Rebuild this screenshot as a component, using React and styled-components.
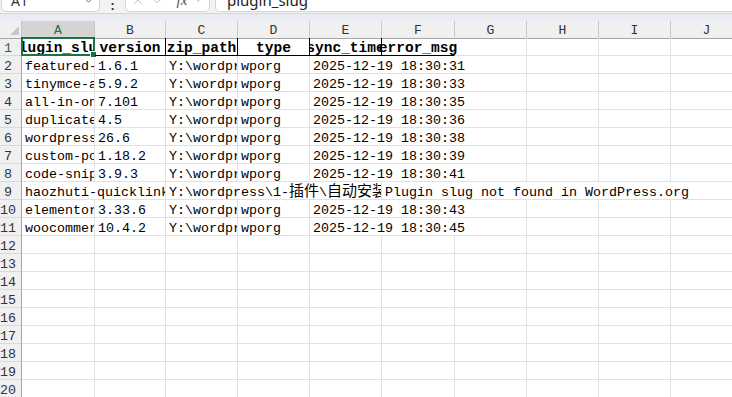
import React from "react";
import styled, { createGlobalStyle } from "styled-components";
import { X, Check, ChevronDown } from "lucide-react";

const green = "#1e7145";
const gridLine = "#e1e1e1";
const headBg = "#f0f0f0";
const mono = `"Liberation Mono", "Noto Sans CJK SC", monospace`;

const colWidths = [73, 71, 72, 72, 72, 73, 72, 72, 72, 72];
const letters = ["A", "B", "C", "D", "E", "F", "G", "H", "I", "J"];
const template = `22px ${colWidths.map((w) => w + "px").join(" ")}`;

const GlobalStyle = createGlobalStyle`
  html, body {
    margin: 0;
    padding: 0;
    background: #fff;
    overflow: hidden;
  }
  body {
    font-family: ${mono};
  }
`;

const Page = styled.div`
  width: 732px;
  height: 397px;
  overflow: hidden;
  display: flex;
  flex-direction: column;
  background: #fff;
`;

const FormulaBar = styled.div`
  height: 12px;
  flex: none;
  display: flex;
  align-items: flex-end;
  overflow: hidden;
  background: #f3f3f3;
  padding: 0 0 1px 1px;
`;

const Box = styled.div`
  height: 24px;
  box-sizing: border-box;
  background: #fff;
  border: 1px solid #d4d4d4;
  border-radius: 5px;
  display: flex;
  align-items: center;
  flex: none;
  color: #333;
  font-family: "Noto Sans", sans-serif;
`;

const NameBox = styled(Box)`
  width: 99px;
  justify-content: space-between;
  padding: 0 4px 0 9px;
  font-size: 14px;
`;

const Colon = styled.div`
  width: 25px;
  height: 12px;
  align-self: flex-start;
  line-height: 11px;
  text-align: center;
  font-family: "Noto Sans", sans-serif;
  font-weight: bold;
  font-size: 13px;
  color: #333;
`;

const ToolBox = styled(Box)`
  width: 85px;
  padding: 0 6px 0 5px;
  gap: 7px;
  color: #a8a8a8;
`;

const Fx = styled.span`
  font-family: "Liberation Serif", serif;
  font-style: italic;
  font-size: 15px;
  color: #555;
  margin-left: 4px;
`;

const FormulaInput = styled(Box)`
  flex: 1;
  margin-left: 5px;
  padding-left: 11px;
  font-size: 15px;
  color: #222;
  border-right: none;
  border-top-right-radius: 0;
  border-bottom-right-radius: 0;
`;

const Band = styled.div`
  height: 8px;
  flex: none;
  box-sizing: border-box;
  background: #e9edf1;
  border-top: 1px solid #d6d6d6;
`;

const Grid = styled.div`
  display: grid;
  grid-template-columns: ${template};
  grid-auto-rows: 18px;
`;

const HeaderRow = styled.div`
  display: grid;
  grid-template-columns: ${template};
  height: 17px;
  flex: none;
`;

const Corner = styled.div`
  position: relative;
  background: ${headBg};
  box-sizing: border-box;
  border-right: 1px solid #c4c4c4;
  border-bottom: 1px solid #a6a6a6;
  &::after {
    content: "";
    position: absolute;
    left: 10px;
    top: 5px;
    width: 9px;
    height: 9px;
    background: #c8c8c8;
    clip-path: polygon(100% 0, 100% 100%, 0 100%);
  }
`;

const ColHead = styled.div`
  box-sizing: border-box;
  background: ${(p) => (p.$active ? "#d4d4d4" : headBg)};
  color: ${(p) => (p.$active ? green : "#333")};
  border-right: 1px solid #c8c8c8;
  border-bottom: 1px solid #a6a6a6;
  text-align: center;
  font-size: 13px;
  line-height: 14px;
  padding-top: 3px;
`;

const RowHead = styled.div`
  box-sizing: border-box;
  background: ${headBg};
  color: ${(p) => (p.$active ? green : "#333")};
  border-right: 1px solid #a6a6a6;
  border-bottom: 1px solid #d9d9d9;
  text-align: center;
  padding: 4px 5px 0 0;
  font-size: 13.33px;
  line-height: 14px;
`;

const Cell = styled.div`
  grid-column: span ${(p) => p.$span};
  box-sizing: border-box;
  border-right: 1px solid ${gridLine};
  border-bottom: 1px solid ${gridLine};
  padding: 4px 0 0 3px;
  font-size: 13.33px;
  line-height: 14px;
  color: #000;
  white-space: nowrap;
  overflow: hidden;
`;

const Wide = styled.span`
  font-family: "Noto Sans CJK SC", sans-serif;
  font-size: 15px;
  line-height: 0;
`;

const TitleCell = styled.div`
  position: relative;
  box-sizing: border-box;
  border-right: 1px solid ${(p) => (p.$edge ? gridLine : "#000")};
  border-bottom: 1px solid ${(p) => (p.$blank ? gridLine : "#000")};
  ${(p) => p.$open && "border-right-color: transparent;"}
  padding-top: 3px;
  font-weight: bold;
  font-size: 14.5px;
  line-height: 15px;
  text-align: center;
  white-space: nowrap;
  overflow: ${(p) => (p.$open ? "visible" : "hidden")};
  display: flex;
  justify-content: center;
`;

const Selection = styled.div`
  position: absolute;
  left: -1px;
  top: -1px;
  right: -1px;
  bottom: -1px;
  border: 2px solid ${green};
  pointer-events: none;
  &::after {
    content: "";
    position: absolute;
    right: -4px;
    bottom: -4px;
    width: 5px;
    height: 5px;
    background: ${green};
    border: 1px solid #fff;
  }
`;

const ClipText = styled.span`
  overflow: hidden;
  white-space: nowrap;
  display: flex;
  justify-content: center;
  width: 100%;
`;

const titles = ["plugin_slug", "version", "zip_path", "type", "sync_time", "error_msg"];

const base = "Y:\\wordpress\\1-插件\\自动安装\\";
const records = [
  ["featured-image-from-url", "1.6.1", "wporg", "2025-12-19 18:30:31"],
  ["tinymce-advanced", "5.9.2", "wporg", "2025-12-19 18:30:33"],
  ["all-in-one-wp-migration", "7.101", "wporg", "2025-12-19 18:30:35"],
  ["duplicate-post", "4.5", "wporg", "2025-12-19 18:30:36"],
  ["wordpress-seo", "26.6", "wporg", "2025-12-19 18:30:38"],
  ["custom-post-type-ui", "1.18.2", "wporg", "2025-12-19 18:30:39"],
  ["code-snippets", "3.9.3", "wporg", "2025-12-19 18:30:41"],
  ["haozhuti-quicklinks", "", "", "", "Plugin slug not found in WordPress.org"],
  ["elementor", "3.33.6", "wporg", "2025-12-19 18:30:43"],
  ["woocommerce", "10.4.2", "wporg", "2025-12-19 18:30:45"],
].map(([slug, ver, type, time, err = ""]) => [
  slug,
  ver,
  base + slug + ".zip",
  type,
  time,
  err,
]);

const cjk = /[\u3000-\u9fff]/;
const textWidth = (t) => [...t].reduce((w, ch) => w + (cjk.test(ch) ? 15 : 8), 0) + 3;

// CJK runs get a wider face, like the sheet's SimSun
const renderText = (t) =>
  t.split(/([\u3000-\u9fff]+)/).map((part, i) =>
    cjk.test(part) ? <Wide key={i}>{part}</Wide> : part
  );

// excel-style spill: text runs on into empty cells to its right
const layoutRow = (values) => {
  const v = [...values, ...Array(10 - values.length).fill("")];
  const cells = [];
  let i = 0;
  while (i < 10) {
    let span = 1;
    if (v[i]) {
      const need = textWidth(v[i]);
      let room = colWidths[i];
      while (i + span < 10 && !v[i + span] && room < need) {
        room += colWidths[i + span];
        span++;
      }
    }
    cells.push({ text: v[i], span, key: i });
    i += span;
  }
  return cells;
};

export default function App() {
  const emptyRows = Array.from({ length: 9 }, (_, k) => k + 12);

  return (
    <Page>
      <GlobalStyle />
      <FormulaBar>
        <NameBox>
          <span>A1</span>
          <ChevronDown size={13} color="#555" strokeWidth={1.6} />
        </NameBox>
        <Colon>:</Colon>
        <ToolBox>
          <X size={16} strokeWidth={1.3} />
          <Check size={16} strokeWidth={1.3} />
          <Fx>fx</Fx>
          <ChevronDown size={10} color="#999" strokeWidth={2} />
        </ToolBox>
        <FormulaInput>plugin_slug</FormulaInput>
      </FormulaBar>
      <Band />
      <HeaderRow>
        <Corner />
        {letters.map((l, i) => (
          <ColHead key={l} $active={i === 0}>
            {l}
          </ColHead>
        ))}
      </HeaderRow>
      <Grid>
        <RowHead $active>1</RowHead>
        {letters.map((l, i) => {
          const t = titles[i];
          if (i === 0)
            return (
              <TitleCell key={l} style={{ overflow: "visible" }}>
                <ClipText>{t}</ClipText>
                <Selection />
              </TitleCell>
            );
          return (
            <TitleCell key={l} $open={i === 5} $edge={i >= 5} $blank={!t}>
              {t}
            </TitleCell>
          );
        })}

        {records.map((rec, r) => (
          <React.Fragment key={r}>
            <RowHead>{r + 2}</RowHead>
            {layoutRow(rec).map((c) => (
              <Cell key={c.key} $span={c.span}>
                {renderText(c.text)}
              </Cell>
            ))}
          </React.Fragment>
        ))}

        {emptyRows.map((n) => (
          <React.Fragment key={n}>
            <RowHead>{n}</RowHead>
            {letters.map((l) => (
              <Cell key={l} $span={1} />
            ))}
          </React.Fragment>
        ))}
      </Grid>
    </Page>
  );
}
